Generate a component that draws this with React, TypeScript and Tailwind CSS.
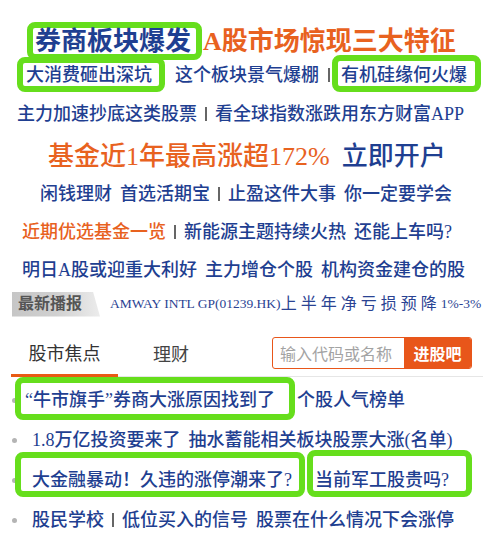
const font = "font-['Liberation_Serif','Noto_Sans_CJK_SC',serif]";

function Box({ className, children }: { className: string; children: React.ReactNode }) {
  return (
    <span
      className={`flex shrink-0 items-center bg-white border-[6px] border-[#66de1c] rounded-[8px] whitespace-nowrap ${className}`}
    >
      {children}
    </span>
  );
}

function Sep({ className = 'mx-[8px]' }: { className?: string }) {
  return <span className={`inline-block w-[2px] h-[14px] bg-[#666] shrink-0 ${className}`} />;
}

function Bullet() {
  return <span className="w-[5px] h-[5px] rounded-full bg-[#b4b4b4] shrink-0" />;
}

export default function App() {
  return (
    <div className={`w-[499px] h-[541px] bg-white overflow-hidden ${font} text-[#1f3f91] whitespace-nowrap`}>
      <div className="pt-[24px]">
        {/* headline */}
        <div className="flex items-center h-[34px] pl-[27px] text-[26px] font-bold">
          <Box className="w-[175px] h-[38px] pl-[2px]">券商板块爆发</Box>
          <span className="ml-[1px] text-[#e8621f]">A股市场惊现三大特征</span>
        </div>

        <div className="flex items-center h-[34px] pl-[17px] text-[18px] font-medium">
          <Box className="w-[148px] h-[35px] pl-[3px] pt-[1px] mb-[1px]">大消费砸出深坑</Box>
          <span className="ml-[10px]">这个板块景气爆棚</span>
          <Sep className="ml-[9px]" />
          <Box className="ml-[2px] w-[149px] h-[37px] pl-[3px] pt-[3px] mb-[3px]">有机硅缘何火爆</Box>
        </div>

        <div className="flex items-center h-[44px] pl-[17px] text-[18px] font-medium">
          <span>主力加速抄底这类股票</span>
          <Sep />
          <span>看全球指数涨跌用东方财富APP</span>
        </div>

        <div className="flex items-center h-[40px] pl-[48px] text-[26px] font-medium">
          <span className="text-[#e8621f]">基金近1年最高涨超172%</span>
          <span className="ml-[12px]">立即开户</span>
        </div>

        <div className="flex items-center h-[36px] pl-[40px] text-[18px] font-medium">
          <span>闲钱理财</span>
          <span className="ml-[8px]">首选活期宝</span>
          <Sep />
          <span>止盈这件大事</span>
          <span className="ml-[8px]">你一定要学会</span>
        </div>

        <div className="flex items-center h-[40px] pl-[22px] text-[18px] font-medium">
          <span className="text-[#e8621f]">近期优选基金一览</span>
          <Sep />
          <span>新能源主题持续火热</span>
          <span className="ml-[8px]">还能上车吗?</span>
        </div>

        <div className="flex items-center h-[36px] pl-[22px] text-[18px] font-medium">
          <span>明日A股或迎重大利好</span>
          <span className="ml-[8px]">主力增仓个股</span>
          <span className="ml-[8px]">机构资金建仓的股</span>
        </div>

        {/* ticker */}
        <div className="flex items-center h-[32px] pl-[12px]">
          <span className="flex items-center w-[88px] h-[25px] pl-[6px] text-[16px] font-bold text-[#555] bg-gradient-to-r from-[#c6c6c6] via-[#d0d0d0] to-[#ececec] [clip-path:polygon(0_0,92%_0,100%_100%,0_100%)]">
            最新播报
          </span>
          <span className="ml-[10px] text-[13.5px] text-[#2a4393]">AMWAY INTL GP(01239.HK)</span>
          <span className="text-[16px] tracking-[4px] text-[#2a4393]">上半年净亏损预降</span>
          <span className="text-[13.5px] text-[#2a4393]">1%-3%</span>
        </div>

        {/* tabs + search */}
        <div className="ml-[11px] w-[472px] h-[57px] border-b border-[#e6e6e6] flex justify-between">
          <div className="flex text-[18px]">
            <div className="w-[107px] -mb-[1px] border-b-[3px] border-[#e85a14] flex items-center justify-center pt-[14px] text-[#333]">
              股市焦点
            </div>
            <div className="ml-[35px] flex items-center pt-[14px] text-[#444]">理财</div>
          </div>
          <div className="mt-[17px] mr-[11px] w-[200px] h-[32px] flex border border-[#e8561a] rounded-[3px] overflow-hidden">
            <div className="flex-1 flex items-center pl-[7px] text-[16px] text-[#a3a3a3] font-['Noto_Sans_CJK_SC',sans-serif]">
              输入代码或名称
            </div>
            <div className="w-[67px] flex items-center justify-center bg-[#e8561a] text-white text-[16px] font-bold font-['Noto_Sans_CJK_SC',sans-serif]">
              进股吧
            </div>
          </div>
        </div>

        {/* list */}
        <div className="mt-[3px] text-[18px] font-medium">
          <div className="flex items-center h-[40px] pl-[12px]">
            <Bullet />
            <Box className="-ml-[2px] w-[280px] h-[43px] pl-[4px] pt-[3px] mb-[3px]">“牛市旗手”券商大涨原因找到了</Box>
            <span className="ml-[2px]">个股人气榜单</span>
          </div>
          <div className="flex items-center h-[40px] pl-[12px]">
            <Bullet />
            <span className="ml-[15px]">1.8万亿投资要来了</span>
            <span className="ml-[8px]">抽水蓄能相关板块股票大涨(名单)</span>
          </div>
          <div className="flex items-center h-[40px] pl-[12px]">
            <Bullet />
            <Box className="-ml-[2px] w-[290px] h-[45px] pl-[11px] pt-[11px] mb-[11px]">大金融暴动！久违的涨停潮来了?</Box>
            <Box className="ml-[2px] w-[165px] h-[47px] pl-[2px] pt-[13px] mb-[13px]">当前军工股贵吗?</Box>
          </div>
          <div className="flex items-center h-[40px] pl-[12px]">
            <Bullet />
            <span className="ml-[15px]">股民学校</span>
            <Sep />
            <span>低位买入的信号</span>
            <span className="ml-[8px]">股票在什么情况下会涨停</span>
          </div>
        </div>
      </div>
    </div>
  );
}
